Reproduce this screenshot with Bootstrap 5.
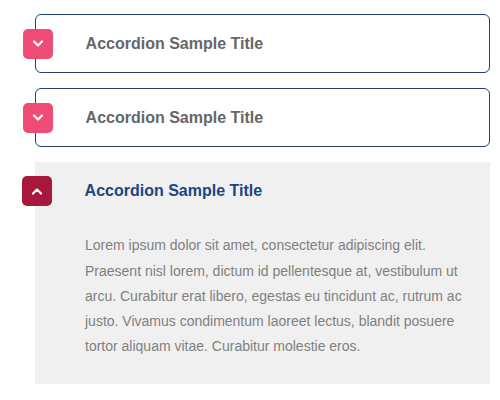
<!DOCTYPE html>
<html lang="en">
<head>
<meta charset="utf-8">
<title>Accordion</title>
<link rel="stylesheet" href="https://cdn.jsdelivr.net/npm/bootstrap@5.3.0/dist/css/bootstrap.min.css">
<style>
html, body { height: 100%; }
body { font-family: "Liberation Sans", Arial, sans-serif; background: #fff; overflow: hidden; }
.acc-wrap { padding: 14px 10px 0 35px; }
.acc-item { position: relative; margin-bottom: 15px; }
.acc-head { height: 59px; border: 1px solid #1f3f75; border-radius: 6px; padding-left: 49.6px; font-size: 16px; font-weight: 700; color: #666; }
.acc-toggle { position: absolute; left: -12px; top: 15px; width: 30px; height: 30px; border-radius: 5px; background: #ee4c74; }
.acc-open { background: #f0f0f0; height: 222px; }
.acc-open .acc-head { border: 0; border-radius: 0; color: #1f4382; height: 57px; padding-left: 49.6px; }
.acc-open .acc-toggle { left: -13px; top: 14px; background: #a9173c; }
.acc-text { padding: 14.4px 25px 0 50px; font-size: 14px; line-height: 25.2px; color: #808080; }
</style>
</head>
<body>
<div class="acc-wrap">
  <div class="acc-item">
    <div class="acc-toggle d-flex align-items-center justify-content-center">
      <svg width="12" height="8" viewBox="0 0 12 8"><path d="M2 1.5 6 5.5 10 1.5" fill="none" stroke="#fff" stroke-width="2.2" stroke-linecap="round" stroke-linejoin="round"/></svg>
    </div>
    <div class="acc-head d-flex align-items-center">Accordion Sample Title</div>
  </div>
  <div class="acc-item">
    <div class="acc-toggle d-flex align-items-center justify-content-center">
      <svg width="12" height="8" viewBox="0 0 12 8"><path d="M2 1.5 6 5.5 10 1.5" fill="none" stroke="#fff" stroke-width="2.2" stroke-linecap="round" stroke-linejoin="round"/></svg>
    </div>
    <div class="acc-head d-flex align-items-center">Accordion Sample Title</div>
  </div>
  <div class="acc-item acc-open">
    <div class="acc-toggle d-flex align-items-center justify-content-center">
      <svg width="12" height="8" viewBox="0 0 12 8"><path d="M2 6.5 6 2.5 10 6.5" fill="none" stroke="#fff" stroke-width="2.2" stroke-linecap="round" stroke-linejoin="round"/></svg>
    </div>
    <div class="acc-head d-flex align-items-center">Accordion Sample Title</div>
    <div class="acc-text">Lorem ipsum dolor sit amet, consectetur adipiscing elit. Praesent nisl lorem, dictum id pellentesque at, vestibulum ut arcu. Curabitur erat libero, egestas eu tincidunt ac, rutrum ac justo. Vivamus condimentum laoreet lectus, blandit posuere tortor aliquam vitae. Curabitur molestie eros.</div>
  </div>
</div>
</body>
</html>
